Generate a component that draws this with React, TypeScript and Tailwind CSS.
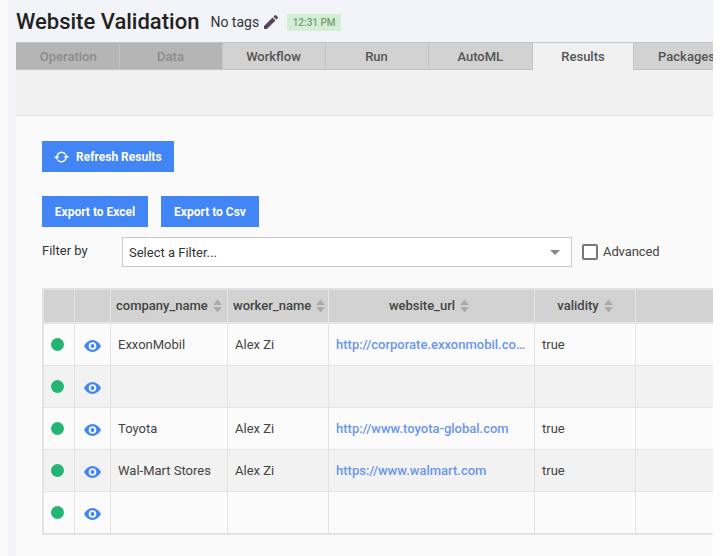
import React from "react";

const tabs = [
  { name: "Operation", w: "w-[103.500px]", cls: "bg-[#b5b5b5] text-[#8c8c8c] border-r border-[#c4c4c4] pt-[1px] pl-[2px]" },
  { name: "Data", w: "w-[103px]", cls: "bg-[#b5b5b5] text-[#8c8c8c] border-r border-[#c4c4c4] pt-[1px]" },
  { name: "Workflow", w: "w-[103px]", cls: "bg-[#d2d2d2] text-[#555] border-r border-[#c4c4c4] pt-[1px]" },
  { name: "Run", w: "w-[103px]", cls: "bg-[#d2d2d2] text-[#555] border-r border-[#c4c4c4] pt-[1px]" },
  { name: "AutoML", w: "w-[103.500px]", cls: "bg-[#d2d2d2] text-[#555] pt-[1px]" },
  { name: "Results", w: "w-[102px]", cls: "bg-[#f0f0f0] text-[#555] border-x border-[#c4c4c4] !border-b-0" },
  { name: "Packages", w: "w-[103px]", cls: "bg-[#d2d2d2] text-[#555] pt-[1px] pl-[2px]" },
];

const rows = [
  { company: "ExxonMobil", worker: "Alex Zi", url: "http://corporate.exxonmobil.co…", valid: "true" },
  { company: "", worker: "", url: "", valid: "" },
  { company: "Toyota", worker: "Alex Zi", url: "http://www.toyota-global.com", valid: "true" },
  { company: "Wal-Mart Stores", worker: "Alex Zi", url: "https://www.walmart.com", valid: "true" },
  { company: "", worker: "", url: "", valid: "" },
];

const gridCols = "grid grid-cols-[31px_36px_117px_101px_206px_101px_90px]";

function SortIcon() {
  return (
    <svg width="9" height="14" viewBox="0 0 9 14" className="ml-[5px] shrink-0 fill-[#aaaaaa]">
      <path d="M4.5 0.5 L8.8 6 H0.2 Z" />
      <path d="M0.2 8 H8.8 L4.5 13.5 Z" />
    </svg>
  );
}

function Eye() {
  return (
    <svg width="17" height="12" viewBox="0 0 17 12" className="block mt-[2px]">
      <path
        fillRule="evenodd"
        fill="#4285f4"
        d="M8.5 0C4.9 0 1.9 2.4 0 6c1.9 3.6 4.9 6 8.5 6s6.6-2.4 8.5-6C15.1 2.4 12.100 0 8.5 0zm0 2.200a3.800 3.800 0 1 1 0 7.600 3.800 3.800 0 0 1 0-7.600z"
      />
      <circle cx="8.500" cy="6" r="1.900" fill="#4285f4" />
    </svg>
  );
}

function HeaderCell({ label, center, last, shift }: { label?: string; center?: boolean; last?: boolean; shift?: boolean }) {
  return (
    <div
      className={`h-[32px] bg-[#d2d2d2] flex items-center text-[13px] font-medium text-[#444] ${
        center ? "justify-center" : "pl-[5px]"
      } ${shift ? "pr-[5px]" : ""} ${last ? "" : "border-r border-[#e6e6e6]"}`}
    >
      {label}
      {label && <SortIcon />}
    </div>
  );
}

export default function App() {
  return (
    <div className="flex w-[721px] h-[556px] bg-white overflow-hidden font-['Roboto',sans-serif]">
      <div className="w-[8px] bg-[#fafafa] shrink-0" />
      <div className="w-[705px] shrink-0 bg-[#f2f4f9] overflow-hidden flex flex-col">
        <div className="h-[42px] pl-[8px] pt-[2px] flex items-center shrink-0">
          <h1 className="text-[22px] font-medium text-[#222] leading-none">Website Validation</h1>
          <span className="ml-[11px] text-[14px] text-[#333]">No tags</span>
          <svg width="14" height="14" viewBox="3 3 18 18" className="ml-[5px] fill-[#54455a]">
            <path d="M3 17.250V21h3.750L17.810 9.940l-3.750-3.750L3 17.250zM20.710 7.040a1 1 0 0 0 0-1.410l-2.340-2.340a1 1 0 0 0-1.410 0l-1.830 1.830 3.750 3.750 1.830-1.830z" />
          </svg>
          <span className="ml-[9px] h-[17px] w-[54px] justify-center bg-[#d3efd3] text-[#7b9a7b] text-[10px] font-medium flex items-center">
            12:31 PM
          </span>
        </div>
        <div className="ml-[8px] flex-1 flex flex-col w-[730px]">
          <div className="flex h-[28px] border-t border-[#c4c4c4] shrink-0">
            {tabs.map((t) => (
              <div
                key={t.name}
                className={`${t.w} h-full shrink-0 flex items-center justify-center text-[13px] font-medium border-b border-b-[#c4c4c4] ${t.cls}`}
              >
                {t.name}
              </div>
            ))}
          </div>
          <div className="h-[46px] bg-[#f0f0f0] border-b border-[#dddddd] shrink-0" />
          <div className="flex-1 bg-[#fafafa] pl-[26px] pt-[25px]">
            <button className="h-[31px] w-[132px] bg-[#4285f4] text-white text-[12px] font-bold flex items-center pl-[12px]">
              <svg width="15" height="12" viewBox="0 0 15 12" fill="none" stroke="white" strokeWidth="1.400" className="mr-[7px]">
                <path d="M2.800 6.200C2.800 3.400 5 1.200 7.600 1.200c1.900 0 3.300.9 4 2.300" />
                <path d="M12.200 5.800c0 2.800-2.200 5-4.800 5-1.900 0-3.300-.9-4-2.300" />
                <path d="M0 5.600h5.400L2.700 8.600z" fill="white" stroke="none" />
                <path d="M9.600 6.400h5.400L12.300 3.400z" fill="white" stroke="none" />
              </svg>
              Refresh Results
            </button>
            <div className="flex gap-[13px] mt-[24px]">
              <button className="h-[31px] w-[106px] bg-[#4285f4] text-white text-[12px] font-bold">Export to Excel</button>
              <button className="h-[31px] w-[98px] bg-[#4285f4] text-white text-[12px] font-bold">Export to Csv</button>
            </div>
            <div className="flex items-center mt-[10px] h-[30px]">
              <span className="w-[80px] text-[13px] text-[#333] -mt-[2px]">Filter by</span>
              <div className="w-[450px] h-[30px] bg-white border border-[#c9c9c9] flex items-center justify-between pl-[6px] pr-[11px] text-[13px] text-[#333]">
                <span className="mt-[1px]">Select a Filter...</span>
                <svg width="10" height="5" viewBox="0 0 10 5" className="fill-[#888]">
                  <path d="M0 0h10L5 5z" />
                </svg>
              </div>
              <div className="ml-[10px] w-[16px] h-[16px] rounded-[2px] border-2 border-[#777] bg-white" />
              <span className="ml-[5px] text-[13px] tracking-[-0.1px] text-[#444] -mt-[1px]">Advanced</span>
            </div>
            <div className="mt-[21px] w-max border-2 border-[#e3e3e3]">
              <div className={gridCols}>
                <HeaderCell />
                <HeaderCell />
                <HeaderCell label="company_name" />
                <HeaderCell label="worker_name" />
                <HeaderCell label="website_url" center shift />
                <HeaderCell label="validity" center />
                <HeaderCell last />
              </div>
              <div className="h-[2px] bg-[#e6e6e6]" />
              {rows.map((r, i) => (
                <div
                  key={i}
                  className={`${gridCols} text-[13px] text-[#444] ${i % 2 === 1 ? "bg-[#f2f2f2]" : "bg-[#fbfbfb]"} ${
                    i < rows.length - 1 ? "h-[42px] border-b border-[#e3e3e3]" : "h-[41px]"
                  }`}
                >
                  <div className="border-r border-[#e3e3e3] pl-[7px] flex items-center">
                    <span className="w-[13px] h-[13px] rounded-full bg-[#22b573] block" />
                  </div>
                  <div className="border-r border-[#e3e3e3] pl-[9px] flex items-center">
                    <Eye />
                  </div>
                  <div className="border-r border-[#e3e3e3] pl-[7px] flex items-center">{r.company}</div>
                  <div className="border-r border-[#e3e3e3] pl-[7px] flex items-center">{r.worker}</div>
                  <div className="border-r border-[#e3e3e3] pl-[7px] flex items-center min-w-0">
                    <span className="whitespace-nowrap text-[#6a96ee] font-medium">{r.url}</span>
                  </div>
                  <div className="border-r border-[#e3e3e3] pl-[7px] flex items-center">{r.valid}</div>
                  <div />
                </div>
              ))}
            </div>
          </div>
        </div>
      </div>
    </div>
  );
}
